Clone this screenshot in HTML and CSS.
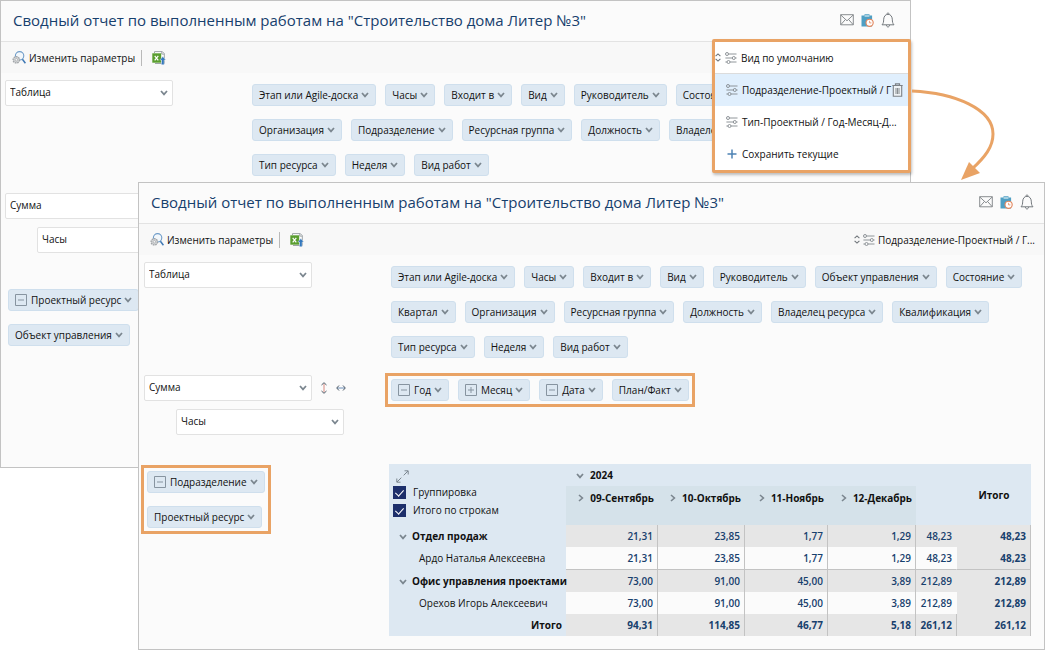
FILE: index.html
```html
<!DOCTYPE html>
<html lang="ru">
<head>
<meta charset="utf-8">
<title>Сводный отчет по выполненным работам</title>
<link rel="stylesheet" href="styles.css">
</head>
<body>
<svg class="sprite" aria-hidden="true">
  <symbol id="chev" viewBox="0 0 8 6"><path d="M1 1l3 3.4L7 1" fill="none" stroke="#7b868f" stroke-width="1.7"/></symbol>
  <symbol id="chev-right" viewBox="0 0 6 8"><path d="M1 1l3.4 3L1 7" fill="none" stroke="#7b868f" stroke-width="1.6"/></symbol>
  <symbol id="minus" viewBox="0 0 12 12"><path d="M.5 .5h11v11H.5z M3 6h6" fill="none" stroke="#8794a0"/></symbol>
  <symbol id="plus" viewBox="0 0 12 12"><path d="M.5 .5h11v11H.5z M3 6h6 M6 3v6" fill="none" stroke="#8794a0"/></symbol>
  <symbol id="mail" viewBox="0 0 14 12"><path d="M.7 .7h12.6v10.1H.7z M.7 .9L7 6.8 13.3 .9 M.9 10.6l4.4-5 M13.1 10.6l-4.4-5" fill="none" stroke="#7d8185" stroke-width=".9"/></symbol>
  <symbol id="clip" viewBox="0 0 13 13"><path d="M.5 1.5h3V.3h5v1.2h2.6v11H.5z" fill="#4f9fc4"/><path d="M3.6 1.2h4.8v1.6H3.6z" fill="#b9dbe9"/><circle cx="8.6" cy="8.8" r="3.6" fill="#fff" stroke="#e3855b" stroke-width="1.1"/><path d="M8.6 6.8v2.1h1.8" fill="none" stroke="#e3855b" stroke-width=".8"/></symbol>
  <symbol id="bell" viewBox="0 0 14 16"><path d="M1 12.8c1.500-1.500 1.600-3 1.700-5.600C2.900 4.300 4.500 2.300 7 2.300s4.100 2 4.300 4.900c.1 2.600.2 4.100 1.700 5.600z M5.400 13c.2 2.600 3 2.600 3.200 0 M6.200 2.300c-.3-2 1.900-2 1.600 0" fill="none" stroke="#74797e"/></symbol>
  <symbol id="lens" viewBox="0 0 14 13"><circle cx="7.600" cy="4.800" r="4.200" fill="#f2f7fb" stroke="#6f9cc8" stroke-width="1.100"/><path d="M10.400 8.200l3 4" stroke="#3f78b4" stroke-width="1.500"/><circle cx="4.300" cy="8.800" r="3.200" fill="#d2d4d6" stroke="#a1a5a8" stroke-width="1.300" stroke-dasharray="1.600 .8"/><circle cx="4.300" cy="8.800" r="1.200" fill="#fff" stroke="#96999c" stroke-width=".6"/></symbol>
  <symbol id="excel" viewBox="0 0 14 14"><path d="M2.500 2V.6h7.800l2 2v9.900H3" fill="#fff" stroke="#9da3a6"/><path d="M9.800 .6v2.500h2.500" fill="none" stroke="#9da3a6"/><path d="M.3 2.300h8.900v9.400H.3z" fill="#5a9e2f"/><path d="M2.700 4.800l3.600 4.600M6.300 4.800L2.700 9.400" stroke="#fff" stroke-width="1.200"/><path d="M10.800 5.600l3 3.500h-1.700v4.600H9.500V9.100H7.800z" fill="#3478bd" stroke="#f8f8f8" stroke-width=".4"/></symbol>
  <symbol id="sliders" viewBox="0 0 12 12"><g fill="none" stroke="#858a8f" stroke-width=".9"><circle cx="2" cy="2" r="1.500"/><path d="M3.500 2h8"/><circle cx="8.800" cy="6" r="1.500"/><path d="M.4 6h6.900M10.300 6h1.300"/><circle cx="3.500" cy="10" r="1.500"/><path d="M.4 10H2M5 10h6.500"/></g></symbol>
  <symbol id="updown" viewBox="0 0 6 9"><path d="M.6 3.200L3 .9l2.400 2.300M.6 5.800L3 8.100l2.400-2.300" fill="none" stroke="#6d7378" stroke-width="1.100"/></symbol>
  <symbol id="trash" viewBox="0 0 11 14"><path d="M.3 2.500h10.400M3.500 2.300V.8h4v1.500" fill="none" stroke="#7c8186" stroke-width="1.200"/><path d="M1.300 3v10.300h8.400V3" fill="#eef2f5" stroke="#7c8186" stroke-width="1.100"/><path d="M4 5v6M5.500 5v6M7 5v6" stroke="#7c8186" stroke-width=".9"/></symbol>
  <symbol id="add" viewBox="0 0 10 10"><path d="M5 .5v9M.5 5h9" stroke="#4d82b4" stroke-width="1.500"/></symbol>
</svg>

<main class="desktop">
  <section class="window window-back">
    <header class="head">
      <h1>Сводный отчет по выполненным работам на "Строительство дома Литер №3"</h1>
      <div class="tray">
        <button aria-label="Почта"><svg width="14" height="12"><use href="#mail"/></svg></button>
        <button aria-label="Задачи"><svg width="13" height="13"><use href="#clip"/></svg></button>
        <button aria-label="Уведомления"><svg width="14" height="16"><use href="#bell"/></svg></button>
      </div>
    </header>
    <div class="toolbar">
      <button class="tool"><svg width="14" height="13"><use href="#lens"/></svg>Изменить параметры</button>
      <span class="divider"></span>
      <button class="tool" aria-label="Экспорт в Excel"><svg width="14" height="14"><use href="#excel"/></svg></button>
    </div>
    <div class="pivot">
      <div class="cell kind">
        <label class="pick"><select aria-label="Представление"><option>Таблица</option></select><svg width="8" height="6"><use href="#chev"/></svg></label>
      </div>
      <div class="cell fields">
        <div class="chips">
          <button class="chip">Этап или Agile-доска<svg><use href="#chev"/></svg></button>
          <button class="chip">Часы<svg><use href="#chev"/></svg></button>
          <button class="chip">Входит в<svg><use href="#chev"/></svg></button>
          <button class="chip">Вид<svg><use href="#chev"/></svg></button>
          <button class="chip">Руководитель<svg><use href="#chev"/></svg></button>
          <button class="chip">Состояние<svg><use href="#chev"/></svg></button>
        </div>
        <div class="chips">
          <button class="chip">Организация<svg><use href="#chev"/></svg></button>
          <button class="chip">Подразделение<svg><use href="#chev"/></svg></button>
          <button class="chip">Ресурсная группа<svg><use href="#chev"/></svg></button>
          <button class="chip">Должность<svg><use href="#chev"/></svg></button>
          <button class="chip">Владелец ресурса<svg><use href="#chev"/></svg></button>
        </div>
        <div class="chips">
          <button class="chip">Тип ресурса<svg><use href="#chev"/></svg></button>
          <button class="chip">Неделя<svg><use href="#chev"/></svg></button>
          <button class="chip">Вид работ<svg><use href="#chev"/></svg></button>
        </div>
      </div>
      <div class="cell measures">
        <div class="measure">
          <label class="pick"><select aria-label="Агрегат"><option>Сумма</option></select></label>
        </div>
        <label class="pick nested"><select aria-label="Показатель"><option>Часы</option></select></label>
      </div>
      <div class="cell rows-area">
        <div class="row-chips">
          <button class="chip"><svg class="box"><use href="#minus"/></svg>Проектный ресурс<svg><use href="#chev"/></svg></button>
          <button class="chip">Объект управления<svg><use href="#chev"/></svg></button>
        </div>
      </div>
    </div>
    <div class="views">
      <button class="view current"><svg class="sort" width="6" height="9"><use href="#updown"/></svg><svg width="12" height="12"><use href="#sliders"/></svg><span>Вид по умолчанию</span></button>
      <div class="view selected"><svg width="12" height="12"><use href="#sliders"/></svg><span>Подразделение-Проектный / Г</span><button class="remove" aria-label="Удалить"><svg width="11" height="14"><use href="#trash"/></svg></button></div>
      <button class="view"><svg width="12" height="12"><use href="#sliders"/></svg><span>Тип-Проектный / Год-Месяц-Д...</span></button>
      <button class="view"><svg width="12" height="10"><use href="#add"/></svg><span>Сохранить текущие</span></button>
    </div>
  </section>

  <section class="window window-front">
    <header class="head">
      <h1>Сводный отчет по выполненным работам на "Строительство дома Литер №3"</h1>
      <div class="tray">
        <button aria-label="Почта"><svg width="14" height="12"><use href="#mail"/></svg></button>
        <button aria-label="Задачи"><svg width="13" height="13"><use href="#clip"/></svg></button>
        <button aria-label="Уведомления"><svg width="14" height="16"><use href="#bell"/></svg></button>
      </div>
    </header>
    <div class="toolbar">
      <button class="tool"><svg width="14" height="13"><use href="#lens"/></svg>Изменить параметры</button>
      <span class="divider"></span>
      <button class="tool" aria-label="Экспорт в Excel"><svg width="14" height="14"><use href="#excel"/></svg></button>
      <button class="tool chosen"><svg width="6" height="9"><use href="#updown"/></svg><svg width="12" height="12"><use href="#sliders"/></svg><span>Подразделение-Проектный / Г...</span></button>
    </div>
    <div class="pivot">
      <div class="cell kind">
        <label class="pick"><select aria-label="Представление"><option>Таблица</option></select><svg width="8" height="6"><use href="#chev"/></svg></label>
      </div>
      <div class="cell fields">
        <div class="chips">
          <button class="chip">Этап или Agile-доска<svg><use href="#chev"/></svg></button>
          <button class="chip">Часы<svg><use href="#chev"/></svg></button>
          <button class="chip">Входит в<svg><use href="#chev"/></svg></button>
          <button class="chip">Вид<svg><use href="#chev"/></svg></button>
          <button class="chip">Руководитель<svg><use href="#chev"/></svg></button>
          <button class="chip">Объект управления<svg><use href="#chev"/></svg></button>
          <button class="chip">Состояние<svg><use href="#chev"/></svg></button>
        </div>
        <div class="chips">
          <button class="chip">Квартал<svg><use href="#chev"/></svg></button>
          <button class="chip">Организация<svg><use href="#chev"/></svg></button>
          <button class="chip">Ресурсная группа<svg><use href="#chev"/></svg></button>
          <button class="chip">Должность<svg><use href="#chev"/></svg></button>
          <button class="chip">Владелец ресурса<svg><use href="#chev"/></svg></button>
          <button class="chip">Квалификация<svg><use href="#chev"/></svg></button>
        </div>
        <div class="chips">
          <button class="chip">Тип ресурса<svg><use href="#chev"/></svg></button>
          <button class="chip">Неделя<svg><use href="#chev"/></svg></button>
          <button class="chip">Вид работ<svg><use href="#chev"/></svg></button>
        </div>
      </div>
      <div class="cell measures">
        <div class="measure">
          <label class="pick"><select aria-label="Агрегат"><option>Сумма</option></select><svg width="8" height="6"><use href="#chev"/></svg></label>
          <button class="order" aria-label="Порядок строк"><svg width="6" height="12" viewBox="0 0 6 12"><path d="M3 2v8" stroke="#d98a80"/><path d="M.5 3L3 .7 5.500 3M.5 9L3 11.300 5.500 9" fill="none" stroke="#4d5965"/></svg></button>
          <button class="order" aria-label="Порядок столбцов"><svg width="10" height="6" viewBox="0 0 10 6"><path d="M1 3h8" stroke="#6c8fb8"/><path d="M3 .5L.7 3 3 5.500M7 .5L9.300 3 7 5.500" fill="none" stroke="#4d5965"/></svg></button>
        </div>
        <label class="pick nested"><select aria-label="Показатель"><option>Часы</option></select><svg width="8" height="6"><use href="#chev"/></svg></label>
      </div>
      <div class="cell columns-area">
        <div class="chips marked">
          <button class="chip"><svg class="box"><use href="#minus"/></svg>Год<svg><use href="#chev"/></svg></button>
          <button class="chip"><svg class="box"><use href="#plus"/></svg>Месяц<svg><use href="#chev"/></svg></button>
          <button class="chip"><svg class="box"><use href="#minus"/></svg>Дата<svg><use href="#chev"/></svg></button>
          <button class="chip">План/Факт<svg><use href="#chev"/></svg></button>
        </div>
      </div>
      <div class="cell rows-area">
        <div class="row-chips marked">
          <button class="chip"><svg class="box"><use href="#minus"/></svg>Подразделение<svg><use href="#chev"/></svg></button>
          <button class="chip">Проектный ресурс<svg><use href="#chev"/></svg></button>
        </div>
      </div>
      <div class="cell table-area">
        <table class="report">
          <colgroup><col class="c-name"><col class="c-sep"><col class="c-oct"><col class="c-nov"><col class="c-dec"><col class="c-sub"><col class="c-total"></colgroup>
          <thead>
            <tr>
              <th rowspan="2" class="corner">
                <button class="expand" aria-label="Развернуть"><svg width="13" height="13" viewBox="0 0 13 13"><path d="M8.500 .8h3.700v3.700M12 1L7.700 5.300M4.500 12.200H.8V8.500M1 12l4.300-4.300" fill="none" stroke="#7b868f"/></svg></button>
                <label class="tick"><input type="checkbox" checked>Группировка</label>
                <label class="tick"><input type="checkbox" checked>Итого по строкам</label>
              </th>
              <th colspan="5" class="year"><svg width="8" height="6"><use href="#chev"/></svg>2024</th>
              <th rowspan="2" class="grand">Итого</th>
            </tr>
            <tr>
              <th class="month"><svg width="6" height="8"><use href="#chev-right"/></svg>09-Сентябрь</th>
              <th class="month"><svg width="6" height="8"><use href="#chev-right"/></svg>10-Октябрь</th>
              <th class="month"><svg width="6" height="8"><use href="#chev-right"/></svg>11-Ноябрь</th>
              <th class="month"><svg width="6" height="8"><use href="#chev-right"/></svg>12-Декабрь</th>
              <th></th>
            </tr>
          </thead>
          <tbody>
            <tr class="group"><th><svg width="8" height="6"><use href="#chev"/></svg>Отдел продаж</th><td>21,31</td><td>23,85</td><td>1,77</td><td>1,29</td><td>48,23</td><td>48,23</td></tr>
            <tr class="person"><th>Ардо Наталья Алексеевна</th><td>21,31</td><td>23,85</td><td>1,77</td><td>1,29</td><td>48,23</td><td>48,23</td></tr>
            <tr class="group ruled"><th><svg width="8" height="6"><use href="#chev"/></svg>Офис управления проектами</th><td>73,00</td><td>91,00</td><td>45,00</td><td>3,89</td><td>212,89</td><td>212,89</td></tr>
            <tr class="person"><th>Орехов Игорь Алексеевич</th><td>73,00</td><td>91,00</td><td>45,00</td><td>3,89</td><td>212,89</td><td>212,89</td></tr>
            <tr class="sum"><th>Итого</th><td>94,31</td><td>114,85</td><td>46,77</td><td>5,18</td><td>261,12</td><td>261,12</td></tr>
          </tbody>
        </table>
      </div>
    </div>
  </section>

  <svg class="arrow" width="90" height="96" viewBox="0 0 90 96" aria-hidden="true"><path d="M1 3C44 5 82 21 82 46c0 13-8 23-21 35" fill="none" stroke="#e9a365" stroke-width="3"/><path d="M50 92l8-18 11 11z" fill="#e9a365"/></svg>
</main>
</body>
</html>
```
FILE: styles.css
```css
* {
  box-sizing: border-box;
}

body {
  margin: 0;
  background: #fff;
  color: #111;
  font: 10px/14px "Open Sans", "Noto Sans", sans-serif;
}

button,
select {
  margin: 0;
  padding: 0;
  border: 0;
  background: none;
  color: inherit;
  font: inherit;
}

svg {
  display: block;
  flex: none;
}

.sprite {
  position: absolute;
  width: 0;
  height: 0;
}

.desktop {
  position: relative;
  min-height: 100vh;
}

.window {
  position: absolute;
  border: 1px solid #c3c3c3;
  background: #fbfbfb;
}

.window-back {
  top: 0;
  left: 0;
  right: 137px;
  min-height: 468px;
}

.window-front {
  top: 182px;
  left: 138px;
  right: 3px;
}

.head {
  display: flex;
  align-items: center;
  justify-content: space-between;
  height: 41px;
  padding: 0 15px 2px 12px;
  border-bottom: 1px solid #e3e3e3;
}

.window-front .head {
  padding-right: 10px;
}

.head h1 {
  margin: 0;
  color: #17406d;
  font-size: 15px;
  font-weight: 400;
  line-height: 20px;
  white-space: nowrap;
}

.tray {
  display: flex;
  align-items: center;
  gap: 7px;
}

.tray button {
  display: block;
}

.toolbar {
  display: flex;
  align-items: center;
  gap: 6px;
  height: 31px;
  padding: 0 9px 0 11px;
  background: #f8f8f8;
}

.tool {
  display: flex;
  align-items: center;
  gap: 3px;
  white-space: nowrap;
}

.divider {
  width: 1px;
  height: 16px;
  margin-right: 4px;
  background: #b9b9b9;
}

.chosen {
  margin-left: auto;
}

.pivot {
  display: grid;
  grid-template-columns: 247px 1fr;
  grid-template-rows: 113px 89px auto;
  padding: 7px 13px 13px 4px;
}

.window-front .pivot {
  padding-left: 5px;
}

.cell {
  min-width: 0;
}

.measures,
.rows-area {
  grid-column: 1;
}

.fields {
  display: flex;
  flex-direction: column;
  gap: 13px;
  padding-top: 4px;
}

.pick {
  display: flex;
  align-items: center;
  justify-content: flex-end;
  width: 168px;
  height: 26px;
  border: 1px solid #e2e2e2;
  border-radius: 2px;
  background: #fff;
  padding-right: 4px;
}

.pick select {
  flex: 1;
  height: 24px;
  padding: 0 0 2px 4px;
  appearance: none;
}

.nested {
  margin: 8px 0 0 32px;
}

.measure {
  display: flex;
  align-items: center;
  gap: 9px;
}

.chips {
  display: flex;
  gap: 9px;
}

.chip {
  display: flex;
  align-items: center;
  gap: 3px;
  height: 22px;
  padding: 0 6px;
  border: 1px solid #cfdfed;
  border-radius: 3px;
  background: #dde8f2;
  white-space: nowrap;
}

.chip svg {
  width: 8px;
  height: 6px;
}

.chip .box {
  width: 12px;
  height: 12px;
  margin-right: 1px;
}

.columns-area {
  padding-top: 4px;
}

.row-chips {
  display: flex;
  flex-direction: column;
  align-items: flex-start;
  gap: 13px;
  width: max-content;
  margin: 7px 0 0 3px;
}

.marked {
  width: max-content;
  outline: 3px solid #e9a365;
  outline-offset: 3px;
}

.table-area {
  margin-left: -2px;
}

.report {
  width: 100%;
  border-collapse: separate;
  border-spacing: 0;
  table-layout: fixed;
  background: #dde8f2;
}

.c-name { width: 177px; }
.c-sep { width: 92px; }
.c-oct { width: 87px; }
.c-nov { width: 83px; }
.c-dec { width: 88px; }
.c-sub { width: 41px; }

.report th,
.report td {
  height: 22px;
  padding: 0 4px;
  text-align: right;
  white-space: nowrap;
}

.report th svg {
  display: inline-block;
  margin-right: 6px;
}

.report td {
  border-right: 1px solid #c3c3c3;
  background: #fbfbfb;
  color: #17406d;
  font-weight: 600;
}

.report td:nth-child(6) {
  border-right-color: transparent;
}

.report .sum td:nth-child(6) {
  border-right-color: #c3c3c3;
}

.report td:last-child,
.group td,
.sum td {
  background: #e6e6e6;
}

.report td:last-child,
.report .sum td {
  font-weight: 700;
}

.report .ruled td {
  height: 23px;
  border-top: 1px solid #c3c3c3;
}

.report .year,
.report .group th,
.report .person th {
  text-align: left;
}

.report .year,
.report .group th {
  padding-left: 10px;
}

.report .group th {
  padding-right: 0;
}

.report .group svg {
  margin-right: 5px;
}

.report .person th {
  padding-left: 30px;
  font-weight: 400;
}

.report .month {
  height: 39px;
  padding-top: 5px;
  background: #d5e2ea;
  vertical-align: top;
}

.report .grand {
  text-align: center;
}

.report .corner {
  padding: 6px 4px 0;
  vertical-align: top;
  font-weight: 400;
  text-align: left;
}

.report .expand {
  display: block;
  margin-left: 3px;
}

.report .expand svg {
  display: block;
}

.tick {
  display: flex;
  align-items: center;
  gap: 7px;
  height: 18px;
}

.tick input {
  width: 13px;
  height: 13px;
  margin: 0;
  appearance: none;
  background: #1d2f6b;
}

.tick input:checked::before {
  content: "";
  display: block;
  width: 4px;
  height: 7px;
  margin: 2px 4px;
  border: solid #fff;
  border-width: 0 1px 1px 0;
  transform: rotate(42deg);
}

.views {
  position: absolute;
  top: 38px;
  right: -1px;
  width: 199px;
  border: 3px solid #e9a365;
  border-radius: 2px;
  background: #fff;
  box-shadow: 1px 2px 3px rgba(0, 0, 0, 0.25);
}

.view {
  display: flex;
  align-items: center;
  gap: 4px;
  width: 100%;
  height: 32px;
  padding: 0 8px 0 11px;
  white-space: nowrap;
}

.view.current {
  border-bottom: 1px solid #dcdcdc;
  padding-left: 0;
}

.view.selected {
  padding-right: 5px;
  background: #e0effd;
}

.view.selected span {
  flex: 1;
}

.remove {
  margin-left: -6px;
}

.arrow {
  position: absolute;
  top: 88px;
  left: 911px;
}
```
